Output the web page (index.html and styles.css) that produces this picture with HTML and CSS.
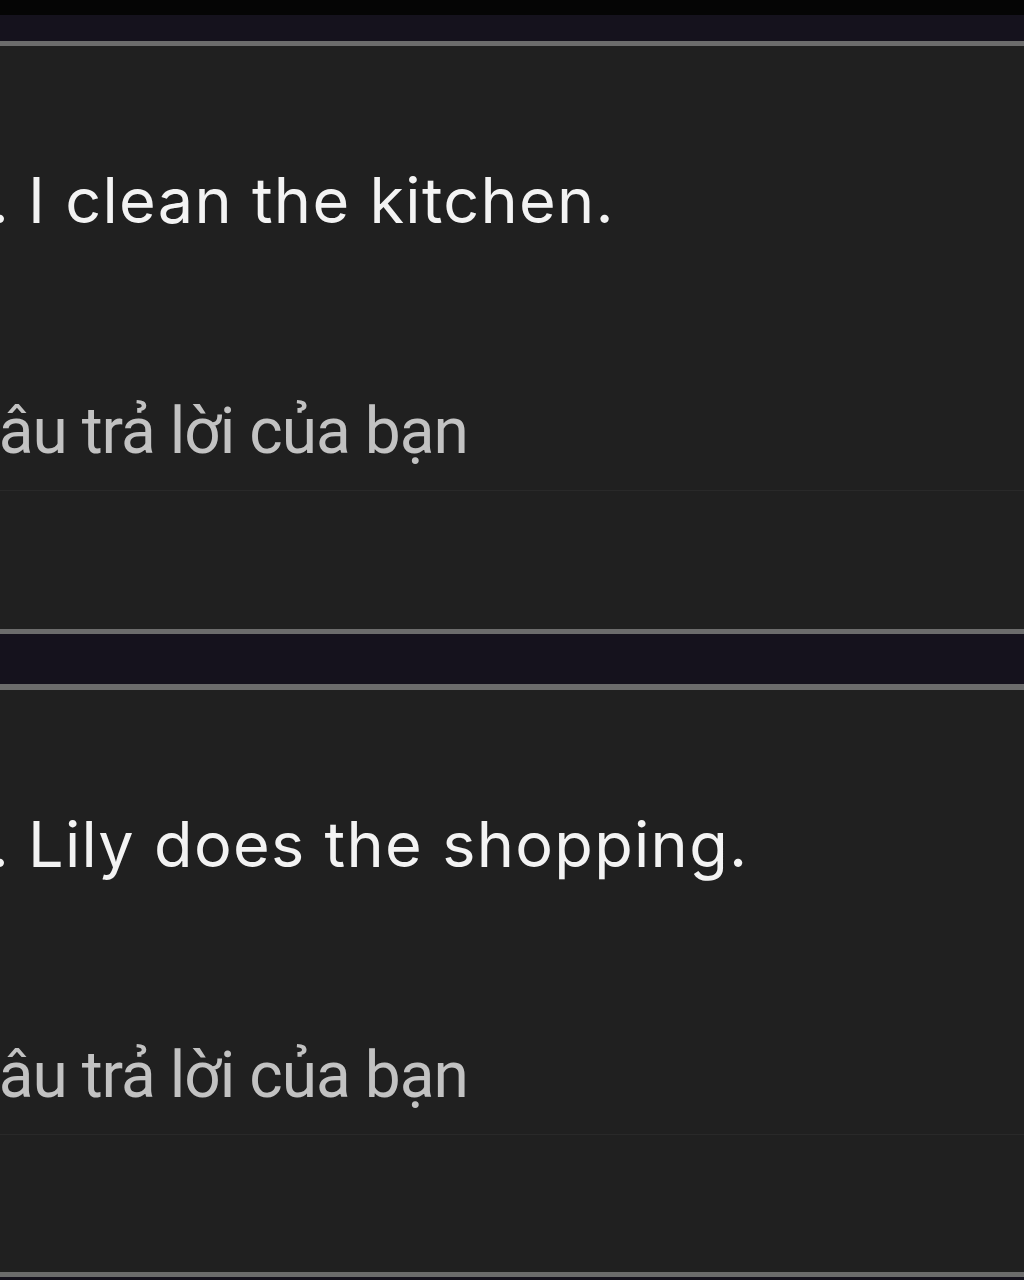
FILE: index.html
```html
<!DOCTYPE html>
<html lang="vi">
<head>
<meta charset="utf-8">
<link rel="stylesheet" href="styles.css">
</head>
<body>
<div class="screen">
  <div class="statusbar"></div>
  <div class="gap gap-top"></div>
  <section class="card">
    <div class="question"><span class="qnum">1.</span><span class="qtext">I clean the kitchen.</span></div>
    <div class="answer"><span class="placeholder">Câu trả lời của bạn</span></div>
  </section>
  <div class="gap gap-mid"></div>
  <section class="card card-second">
    <div class="question"><span class="qnum">2.</span><span class="qtext">Lily does the shopping.</span></div>
    <div class="answer"><span class="placeholder">Câu trả lời của bạn</span></div>
  </section>
  <div class="gap gap-bottom"></div>
</div>
</body>
</html>
```
FILE: styles.css
```css
html, body {
  margin: 0;
  padding: 0;
  background: #15121d;
}
.screen {
  width: 1024px;
  height: 1280px;
  overflow: hidden;
  display: flex;
  flex-direction: column;
  background: #15121d;
}
.statusbar {
  height: 15px;
  flex: none;
  background: #050505;
}
.gap {
  flex: none;
  background: #15121d;
}
.gap-top { height: 26px; }
.gap-mid { height: 50px; }
.gap-bottom { flex: 1; }
.card {
  flex: none;
  height: 583px;
  box-sizing: content-box;
  background: #202020;
  border-top: 5px solid #6c6c6c;
  border-bottom: 5px solid #6c6c6c;
  overflow: hidden;
}
.card-second {
  height: 582px;
  border-top-width: 6px;
}
.question {
  display: flex;
  gap: 19px;
  font-family: Inter, "Noto Sans", sans-serif;
  font-size: 63px;
  line-height: 80px;
  letter-spacing: 1.3px;
  color: #f3f3f3;
  white-space: nowrap;
  padding-top: 114px;
  margin-left: -51px;
}
.qnum {
  flex: none;
  width: 60px;
  text-align: right;
  letter-spacing: 0;
}
.answer {
  margin-top: 152px;
  padding-bottom: 18px;
  border-bottom: 1px solid #292929;
}
.placeholder {
  display: block;
  font-family: Roboto, "Noto Sans", sans-serif;
  font-size: 64px;
  line-height: 80px;
  letter-spacing: -1px;
  color: #c2c2c2;
  white-space: nowrap;
  margin-left: -42px;
}
```
